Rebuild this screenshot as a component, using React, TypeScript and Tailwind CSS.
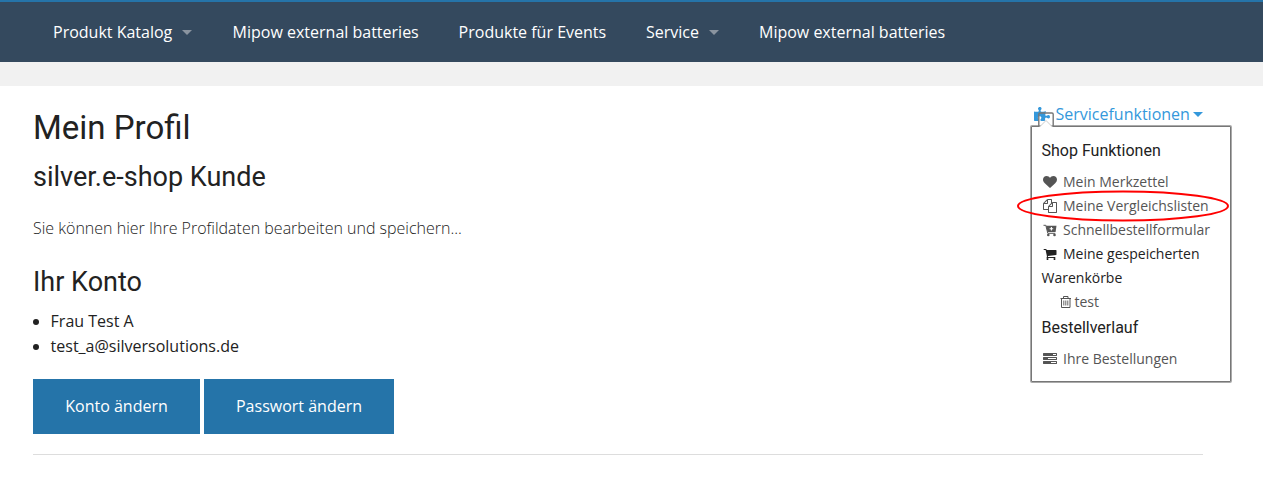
import React from "react";
import { FaPuzzlePiece } from "react-icons/fa";

const nav = [
  { label: "Produkt Katalog", menu: true, width: "w-[179.6px]" },
  { label: "Mipow external batteries", menu: false, width: "w-[226px]" },
  { label: "Produkte für Events", menu: false, width: "w-[187.4px]" },
  { label: "Service", menu: true, width: "w-[113px]" },
  { label: "Mipow external batteries", menu: false, width: "w-[226px]" },
];

function Glyph({ d }: { d: string }) {
  return (
    <svg viewBox="0 0 1792 1792" className="h-3.5 w-3.5 shrink-0" fill="currentColor">
      <path d={d} />
    </svg>
  );
}

const HEART =
  "M896 1664q-26 0-44-18l-624-602q-10-8-27.5-26t-55.5-65.5-68-97.5-53.5-121-23.5-138q0-220 127-344t351-124q62 0 126.5 21.5t120 58 95.5 68.5 76 68q36-36 76-68t95.5-68.5 120-58 126.5-21.5q224 0 351 124t127 344q0 221-229 450l-623 600q-18 18-44 18z";
const FILES =
  "M1696 384q40 0 68 28t28 68v1216q0 40-28 68t-68 28h-960q-40 0-68-28t-28-68v-288h-544q-40 0-68-28t-28-68v-672q0-40 20-88t48-76l408-408q28-28 76-48t88-20h416q40 0 68 28t28 68v328q68-40 128-40h416zm-544 213l-299 299h299v-299zm-640-384l-299 299h299v-299zm196 647l316-316v-416h-384v416q0 40-28 68t-68 28h-416v640h512v-256q0-40 20-88t48-76zm956 804v-1152h-384v416q0 40-28 68t-68 28h-416v640h896z";
const CART =
  "M704 1536q0 52-38 90t-90 38-90-38-38-90 38-90 90-38 90 38 38 90zm896 0q0 52-38 90t-90 38-90-38-38-90 38-90 90-38 90 38 38 90zm128-1088v512q0 24-16.5 42.5t-40.5 21.5l-1044 122q13 60 13 70 0 16-24 64h920q26 0 45 19t19 45-19 45-45 19h-1024q-26 0-45-19t-19-45q0-11 8-31.5t16-36 21.5-40 15.5-29.5l-177-823h-204q-26 0-45-19t-19-45 19-45 45-19h256q16 0 28.5 6.5t19.5 15.5 13 24.5 8 26 5.5 29.5 4.5 26h1201q26 0 45 19t19 45z";
const TASKS =
  "M1024 1408h640v-128h-640v128zm-384-512h1024v-128h-1024v128zm640-512h384v-128h-384v128zm512 832v256q0 26-19 45t-45 19h-1664q-26 0-45-19t-19-45v-256q0-26 19-45t45-19h1664q26 0 45 19t19 45zm0-512v256q0 26-19 45t-45 19h-1664q-26 0-45-19t-19-45v-256q0-26 19-45t45-19h1664q26 0 45 19t19 45zm0-512v256q0 26-19 45t-45 19h-1664q-26 0-45-19t-19-45v-256q0-26 19-45t45-19h1664q26 0 45 19t19 45z";

function CartPlus() {
  return (
    <svg viewBox="0 0 14 14" className="h-3.5 w-3.5 shrink-0">
      <path d="M.5 2.300h2.300l2 8h7.500" fill="none" stroke="currentColor" strokeWidth="1" />
      <path d="M3 2.800h10.500L12.600 9H4.600z" fill="currentColor" />
      <circle cx="5.300" cy="12" r="1.300" fill="currentColor" />
      <circle cx="11.500" cy="12" r="1.300" fill="currentColor" />
      <path d="M8.400 4v3.600M6.600 5.800h3.600" stroke="#fff" strokeWidth="1.100" />
    </svg>
  );
}

function Trash() {
  return (
    <svg viewBox="0 0 12 14" className="h-3.5 w-3 shrink-0" fill="none" stroke="currentColor">
      <path d="M.5 3.500h10.500M3.500 3.300V1.500h4.500v1.800M1.500 3.500v9h8.500v-9" />
      <path d="M3.800 5.500v5M5.800 5.500v5M7.800 5.500v5" strokeWidth=".9" />
    </svg>
  );
}

function Entry({ icon, children, dark }: { icon: React.ReactNode; children: React.ReactNode; dark?: boolean }) {
  return (
    <div className={`flex h-6 items-center gap-[6px] pl-[1.5px] whitespace-nowrap ${dark ? "text-[#222]" : "text-[#555]"}`}>
      {icon}
      <span>{children}</span>
    </div>
  );
}

export default function App() {
  return (
    <div className="relative h-[479px] w-full overflow-hidden bg-white font-['Open_Sans',sans-serif] text-base text-[#222]">
      <nav className="flex h-[62px] items-center border-t-2 border-[#2574a9] bg-[#34495e] pl-[33px] text-white">
        {nav.map((item, i) => (
          <a key={i} className={`flex shrink-0 items-center whitespace-nowrap pl-5 ${item.width}`}>
            {item.label}
            {item.menu && (
              <svg viewBox="0 0 10 5" className="ml-[10px] h-[5px] w-[10px]" fill="#8a949f">
                <path d="M0 0h10L5 5z" />
              </svg>
            )}
          </a>
        ))}
      </nav>
      <div className="h-6 bg-[#f1f1f1]" />

      <div className="flex justify-between pr-[60px] pl-[33px]">
        <main className="w-[700px]">
          <h1 className="mt-[19px] font-['Roboto',sans-serif] text-[33px] leading-[46px]">Mein Profil</h1>
          <h2 className="mt-[7px] font-['Roboto',sans-serif] text-[27px] leading-[38px]">silver.e-shop Kunde</h2>
          <p className="mt-[19px] leading-[26px] font-light">Sie können hier Ihre Profildaten bearbeiten und speichern...</p>
          <h2 className="mt-[22px] font-['Roboto',sans-serif] text-[27px] leading-[38px]">Ihr Konto</h2>
          <ul className="mt-2 list-disc pl-[17.6px] leading-[25px]">
            <li>Frau Test A</li>
            <li>test_a@silversolutions.de</li>
          </ul>
          <div className="mt-5 flex gap-1 text-white">
            <button className="h-[55px] w-[167px] bg-[#2574a9] pb-[2px]">Konto ändern</button>
            <button className="h-[55px] w-[190px] bg-[#2574a9] pb-[2px]">Passwort ändern</button>
          </div>
        </main>
        <aside className="relative mt-4 w-[170px]">
          <a className="flex h-6 items-center whitespace-nowrap text-[#3498db]">
            <FaPuzzlePiece className="mr-1.5 ml-[0.5px] h-4 w-4 shrink-0" />
            <span>Servicefunktionen</span>
            <svg viewBox="0 0 10 5" className="ml-[3.5px] h-[5px] w-[10px] shrink-0" fill="currentColor">
              <path d="M0 0h10L5 5z" />
            </svg>
          </a>
          <div className="absolute top-[24px] -left-[2px] h-[256px] w-[200px] rounded-[1px] border border-[#777] bg-white pt-[11px] pl-[9.5px] text-sm shadow-[0_0_0_1px_#aaa]">
            <h3 className="font-['Roboto',sans-serif] text-base leading-[25px]">Shop Funktionen</h3>
            <div className="mt-[7px]">
              <Entry icon={<Glyph d={HEART} />}>Mein Merkzettel</Entry>
              <Entry icon={<Glyph d={FILES} />}>Meine Vergleichslisten</Entry>
              <Entry icon={<CartPlus />}>Schnellbestellformular</Entry>
              <Entry icon={<Glyph d={CART} />} dark>Meine gespeicherten</Entry>
              <div className="h-6 leading-6">Warenkörbe</div>
              <div className="flex h-6 items-center gap-[3px] pl-[18px] text-[#555]">
                <Trash />
                <span>test</span>
              </div>
            </div>
            <h3 className="mt-px font-['Roboto',sans-serif] text-base leading-[25px]">Bestellverlauf</h3>
            <div className="mt-[7px]">
              <Entry icon={<Glyph d={TASKS} />}>Ihre Bestellungen</Entry>
            </div>
          </div>
          <svg className="absolute top-[9px] left-[4px] h-[17px] w-[18px]" viewBox="0 0 18 17">
            <path d="M2 16.500L9 9l7 7.500z" fill="#fff" />
            <path d="M2.500 16L9 9.500l6.500 6.500" fill="none" stroke="#ccc" />
            <path d="M1.800 15.500V3.200q0-1.200 1.200-1.200h12q1.200 0 1.200 1.200v12.300" fill="none" stroke="#777" strokeWidth="1.400" />
          </svg>
          <svg className="absolute top-[87px] -left-[17px] h-[34px] w-[214px]" viewBox="0 0 214 34">
            <ellipse cx="107" cy="17" rx="105" ry="14.500" fill="none" stroke="#ff0000" strokeWidth="2" />
          </svg>
        </aside>
      </div>
      <hr className="mt-5 mr-[60px] ml-[33px] border-[#ddd]" />
    </div>
  );
}
